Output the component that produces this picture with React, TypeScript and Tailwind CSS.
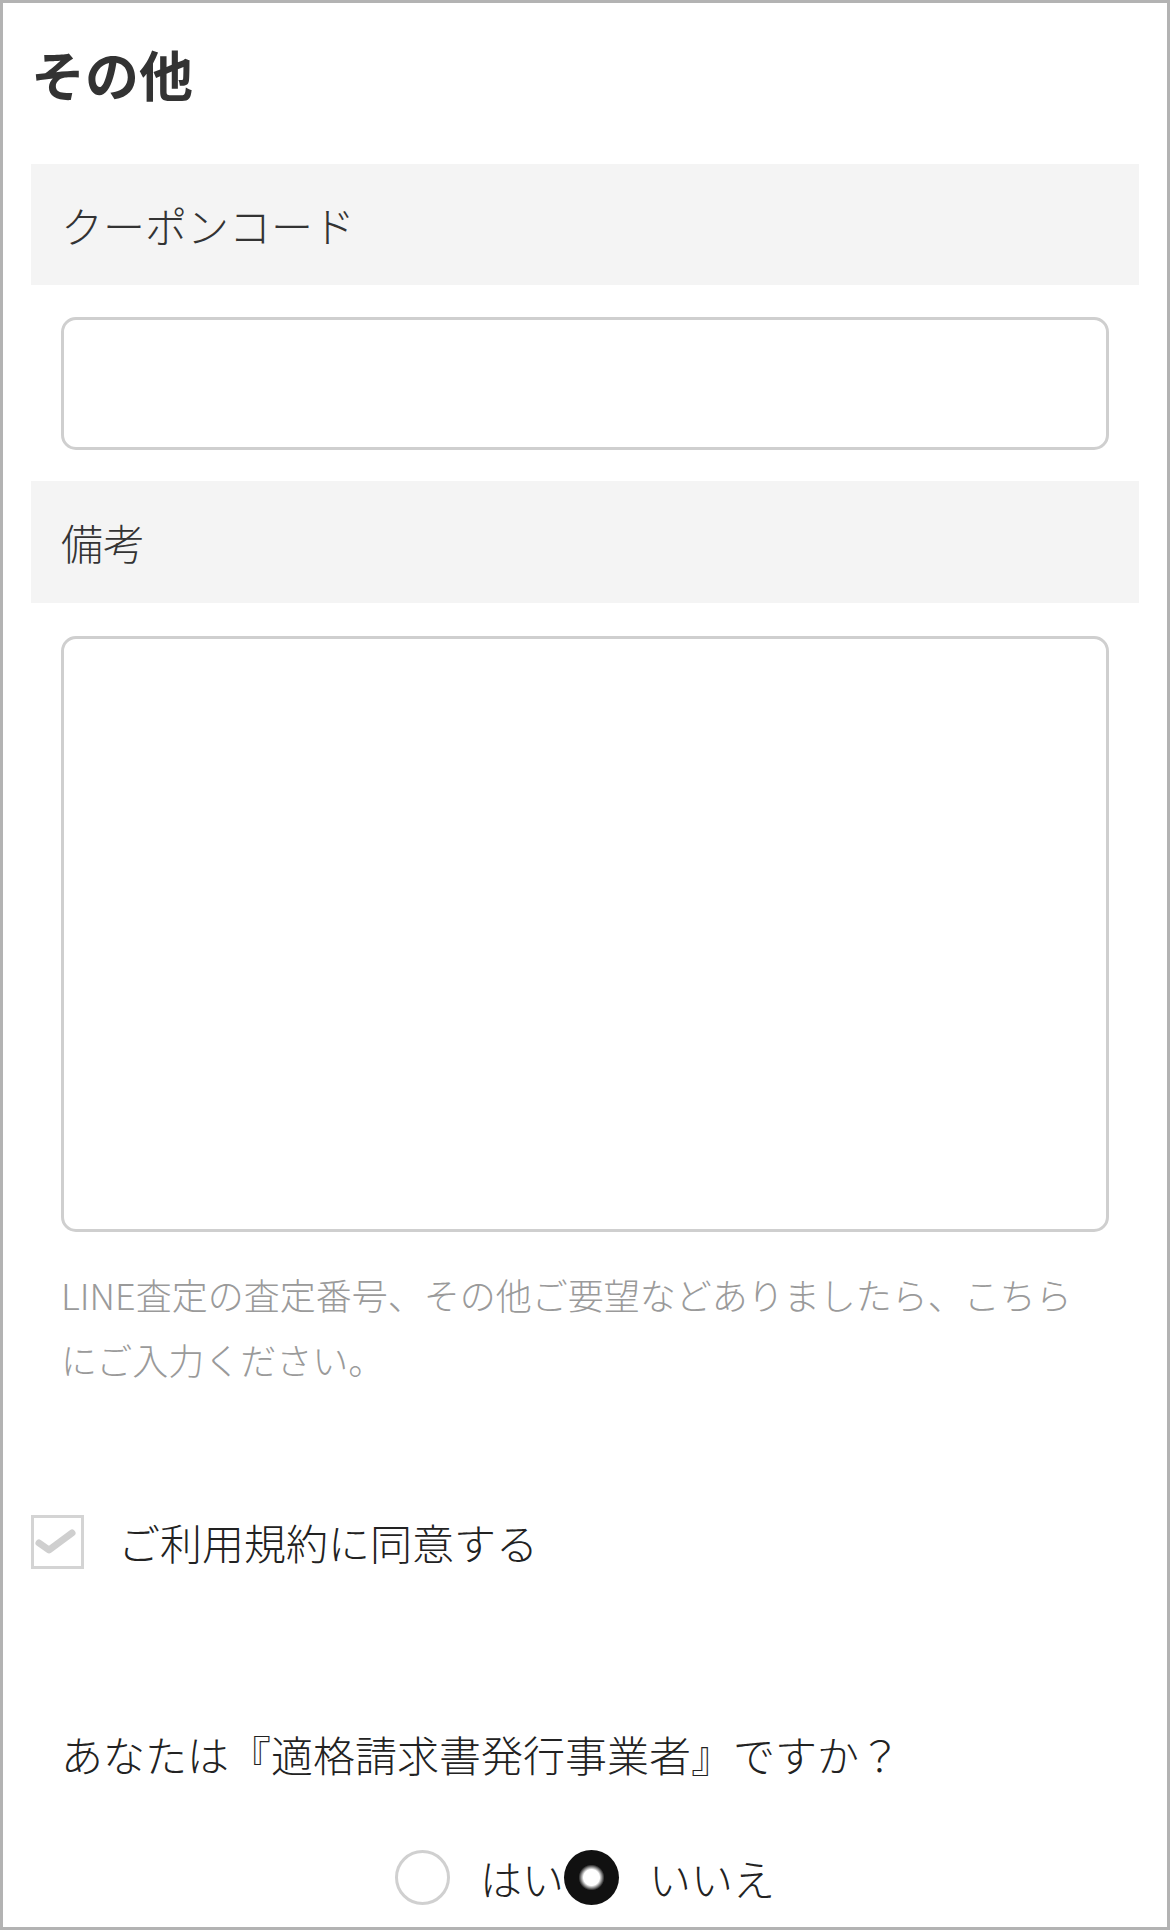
import React from "react";

const font = { fontFamily: '"Noto Sans CJK JP", "Noto Sans", sans-serif' };

export default function App() {
  return (
    <div
      className="w-[1170px] h-[1930px] box-border border-[3px] border-[#b3b3b3] bg-white px-[28px] text-[#333333] overflow-hidden font-light"
      style={font}
    >
      <div className="mt-[31px] h-[80px] text-[54px] leading-[80px] font-bold text-[#333333]">
        その他
      </div>

      <div className="mt-[50px] h-[121px] bg-[#f4f4f4] flex items-center pl-[30px] text-[42px] leading-[60px] text-[#333333]">
        クーポンコード
      </div>

      <div className="px-[30px]">
        <div className="mt-[32px] h-[133px] rounded-[15px] border-[3px] border-[#cfcfcf] bg-white" />
      </div>

      <div className="mt-[31px] h-[122px] bg-[#f4f4f4] flex items-center pl-[30px] text-[42px] leading-[60px] text-[#333333]">
        備考
      </div>

      <div className="px-[30px]">
        <div className="mt-[33px] h-[596px] rounded-[15px] border-[3px] border-[#cfcfcf] bg-white" />
        <p className="mt-[30px] text-[36px] leading-[65px] text-[#9a9a9a] whitespace-nowrap">
          LINE査定の査定番号、その他ご要望などありましたら、こちら
          <br />
          にご入力ください。
        </p>
      </div>

      <div className="mt-[123px] flex items-center h-[54px]">
        <div className="w-[53px] h-[54px] box-border border-[3px] border-[#d4d4d4] bg-white flex items-center justify-center shrink-0">
          <svg width="47" height="48" viewBox="0 0 47 48">
            <path
              d="M5 25 L15 32 L38 15"
              fill="none"
              stroke="#cfcfcf"
              strokeWidth="7"
              strokeLinecap="round"
              strokeLinejoin="round"
            />
          </svg>
        </div>
        <span className="ml-[34px] text-[42px] leading-[60px] text-[#222222]">
          ご利用規約に同意する
        </span>
      </div>

      <div className="mt-[155px] pl-[30px] h-[60px] text-[42px] leading-[60px] text-[#222222]">
        あなたは『適格請求書発行事業者』ですか？
      </div>

      <div className="mt-[66px] flex items-center justify-center h-[55px]">
        <div className="flex items-center">
          <div className="w-[55px] h-[55px] rounded-full box-border border-[3px] border-[#d0d0d0] bg-white shrink-0" />
          <span className="ml-[30px] text-[42px] leading-[55px] text-[#222222]">はい</span>
        </div>
        <div className="flex items-center">
          <div className="w-[55px] h-[55px] rounded-full shrink-0 bg-[radial-gradient(circle,#ffffff_0px,#ffffff_8px,#111111_13px)]" />
          <span className="ml-[30px] text-[42px] leading-[55px] text-[#222222]">いいえ</span>
        </div>
      </div>
    </div>
  );
}
